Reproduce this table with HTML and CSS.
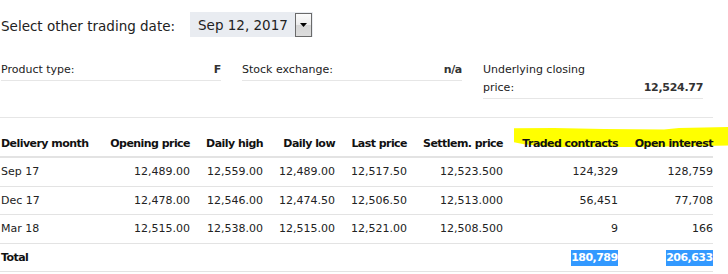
FILE: index.html
```html
<!DOCTYPE html>
<html>
<head>
<meta charset="utf-8">
<link rel="stylesheet" href="styles.css">
</head>
<body>
<div class="page">
  <div class="date-row">
    <span class="date-label">Select other trading date:</span>
    <div class="date-select">
      <span class="date-value">Sep 12, 2017</span>
      <span class="date-btn"><svg width="7" height="4" viewBox="0 0 7 4"><path d="M0 0H7L3.5 4Z" fill="#000"/></svg></span>
    </div>
  </div>

  <div class="info">
    <div class="info-item">
      <span class="info-label">Product type:</span>
      <span class="info-value">F</span>
    </div>
    <div class="info-item">
      <span class="info-label">Stock exchange:</span>
      <span class="info-value">n/a</span>
    </div>
    <div class="info-item">
      <span class="info-label">Underlying closing<br>price:</span>
      <span class="info-value">12,524.77</span>
    </div>
  </div>

  <div class="table-wrap">
    <div class="marker"></div>
    <table class="data">
      <colgroup>
        <col class="c1"><col class="c2"><col class="c3"><col class="c4"><col class="c5"><col class="c6"><col class="c7"><col class="c8">
      </colgroup>
      <thead>
        <tr>
          <th class="left">Delivery month</th>
          <th>Opening price</th>
          <th>Daily high</th>
          <th>Daily low</th>
          <th>Last price</th>
          <th>Settlem. price</th>
          <th>Traded contracts</th>
          <th>Open interest</th>
        </tr>
      </thead>
      <tbody>
        <tr>
          <td class="left">Sep 17</td>
          <td>12,489.00</td><td>12,559.00</td><td>12,489.00</td><td>12,517.50</td><td>12,523.500</td><td>124,329</td><td>128,759</td>
        </tr>
        <tr>
          <td class="left">Dec 17</td>
          <td>12,478.00</td><td>12,546.00</td><td>12,474.50</td><td>12,506.50</td><td>12,513.000</td><td>56,451</td><td>77,708</td>
        </tr>
        <tr>
          <td class="left">Mar 18</td>
          <td>12,515.00</td><td>12,538.00</td><td>12,515.00</td><td>12,521.00</td><td>12,508.500</td><td>9</td><td>166</td>
        </tr>
        <tr class="total">
          <td class="left">Total</td>
          <td></td><td></td><td></td><td></td><td></td>
          <td><span class="sel">180,789</span></td>
          <td><span class="sel">206,633</span></td>
        </tr>
      </tbody>
    </table>
  </div>
</div>
</body>
</html>
```
FILE: styles.css
```css
html, body {
  margin: 0;
  padding: 0;
  background: #fff;
}
body {
  font-family: Verdana, "DejaVu Sans", sans-serif;
  color: #222;
}
.page {
  width: 728px;
  overflow: hidden;
}
.date-row {
  display: flex;
  align-items: center;
  padding: 12px 0 0 1px;
  height: 25px;
}
.date-label {
  font-size: 13.5px;
  width: 189px;
  padding-top: 2px;
}
.date-select {
  display: flex;
  align-items: center;
  height: 25px;
  width: 123px;
  background: #e9ecf1;
}
.date-value {
  font-size: 13.5px;
  padding: 0 0 0 8px;
  width: 97px;
}
.date-btn {
  width: 15px;
  height: 22px;
  border: 1px solid #6a6a6a;
  background: linear-gradient(#fbfbfb 0%, #ececec 50%, #d6d6d6 51%, #dcdcdc 100%);
  display: flex;
  align-items: center;
  justify-content: center;
}
.info {
  display: grid;
  grid-template-columns: 220px 220px 220px;
  column-gap: 21px;
  margin-top: 24px;
  padding-left: 1px;
  font-size: 11px;
  align-items: start;
}
.info-item {
  display: flex;
  justify-content: space-between;
  align-items: flex-end;
  line-height: 18px;
  border-bottom: 1px solid #e6e6e6;
  padding-bottom: 1px;
}
.info-value {
  font-weight: bold;
  color: #333;
  letter-spacing: -0.3px;
}
.table-wrap {
  position: relative;
  margin-top: 18px;
  width: 713px;
  border-top: 1px solid #e6e6e6;
}
.marker {
  position: absolute;
  left: 514px;
  top: 7px;
  width: 214px;
  height: 24px;
  background: #ffff00;
  clip-path: polygon(0 14%, 40px 13%, 90px 17%, 150px 19%, 165px 13%, 190px 10%, 214px 8%, 214px 85%, 190px 88%, 120px 92%, 40px 92%, 10px 80%, 0 72%);
}
table.data {
  position: relative;
  width: 713px;
  table-layout: fixed;
  border-collapse: collapse;
  font-size: 11px;
}
col.c1 { width: 100px; }
col.c2 { width: 90px; }
col.c3 { width: 73px; }
col.c4 { width: 72px; }
col.c5 { width: 72px; }
col.c6 { width: 96px; }
col.c7 { width: 115px; }
col.c8 { width: 95px; }
table.data th,
table.data td {
  text-align: right;
  padding: 0;
  white-space: nowrap;
  border-bottom: 1px solid #e3e3e3;
}
table.data th {
  font-weight: bold;
  height: 32px;
  vertical-align: bottom;
  padding-bottom: 6px;
  color: #111;
  letter-spacing: -0.55px;
  border-bottom-width: 2px;
}
table.data td {
  height: 27.6px;
  vertical-align: middle;
}
table.data .left {
  text-align: left;
  padding-left: 1px;
}
table.data tr.total td {
  font-weight: bold;
  color: #111;
  letter-spacing: -0.55px;
}
.sel {
  display: inline-block;
  background: #3399ff;
  color: #fff;
  line-height: 16px;
  padding-right: 0.5px;
}
```
